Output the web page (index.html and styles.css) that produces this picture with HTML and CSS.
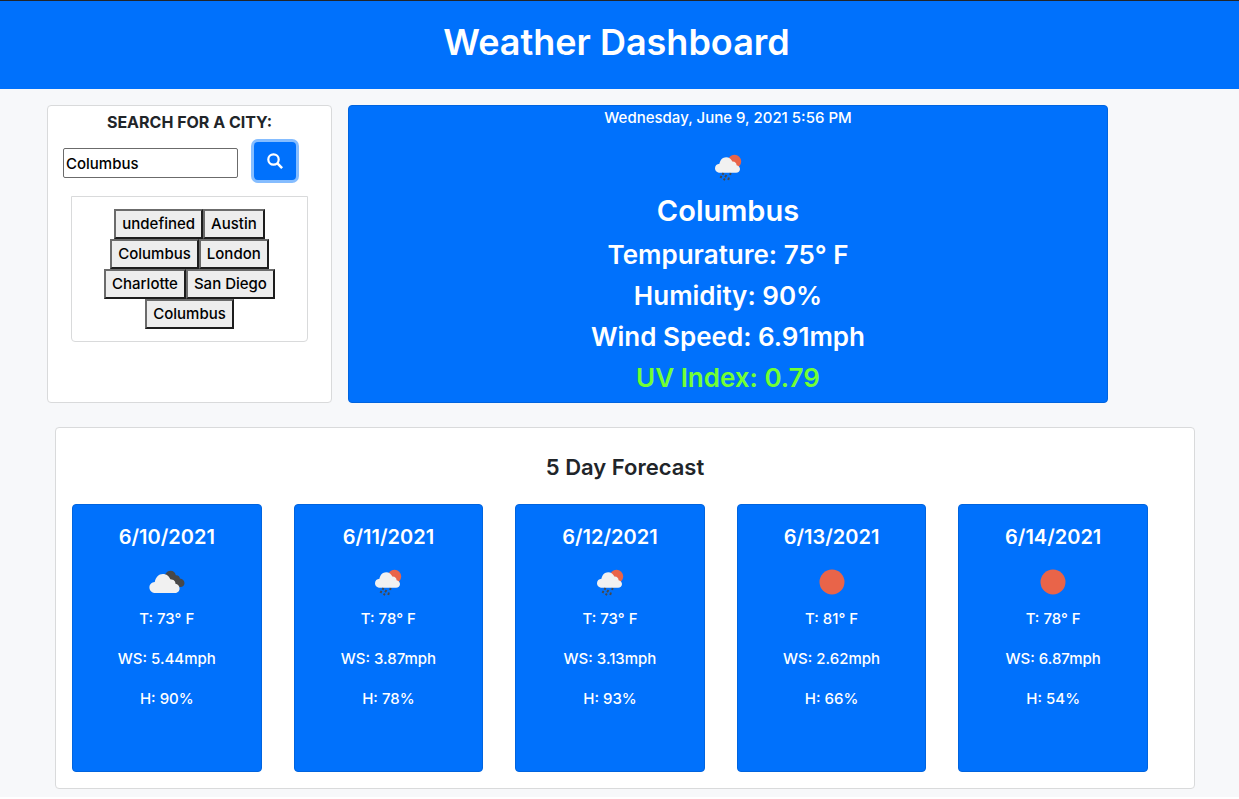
FILE: index.html
```html
<!DOCTYPE html>
<html lang="en">
<head>
<meta charset="utf-8">
<meta name="viewport" content="width=device-width, initial-scale=1">
<title>Weather Dashboard</title>
<link rel="stylesheet" href="styles.css">
</head>
<body>
<svg class="sprite" aria-hidden="true">
  <symbol id="cloud" viewBox="0 0 27 17">
    <path d="M5.600 17C2.500 17 0 14.900 0 12c0-2.700 2-4.800 4.800-4.900C5.500 3 8.300 0 12 0c3.200 0 5.800 2 6.700 4.800 3.300.1 4.600 2 4.600 3.900 2 .2 3.700 1.900 3.700 4.200 0 2.400-1.900 4.100-4.200 4.100z"/>
  </symbol>
  <symbol id="rain" viewBox="0 0 50 50">
    <circle cx="31.500" cy="19.500" r="6.700" fill="#e96449"/>
    <use href="#cloud" x="12" y="15" width="25" height="16" fill="#f1f1f1"/>
    <path d="M20.500 31l-1 1.800M27.700 31l-.6 2M18.500 33.800l-1 2.200M23.500 33l-1.400 2.200M21.800 36.500l-1 1.800M26 35.500l-.8 2.500" fill="none" stroke="#484848" stroke-width="1.900"/>
  </symbol>
  <symbol id="clouds" viewBox="0 0 50 50">
    <path d="M22 22c.5-5 3-8.200 6.500-8.200 3 0 4.700 1.800 5.300 4.400 2.600-.2 4 1.300 4.100 3.200 2.700.4 4.600 2.400 4.600 4.600 0 2.400-1.800 4-4 4H26z" fill="#484848"/>
    <use href="#cloud" x="7" y="17" width="31" height="19" fill="#f1f1f1"/>
  </symbol>
  <symbol id="sun" viewBox="0 0 50 50">
    <circle cx="25" cy="25" r="12.500" fill="#e96449"/>
  </symbol>
</svg>

<header class="banner"><h1>Weather Dashboard</h1></header>

<main class="page">
  <div class="top">
    <section class="card search">
      <label class="search-label" for="city">Search for a city:</label>
      <form class="search-form">
        <input class="search-input" id="city" type="text" value="Columbus">
        <button class="search-button" type="button" aria-label="Search">
          <svg viewBox="0 0 16 16" width="16" height="16" aria-hidden="true"><circle cx="6.500" cy="6.500" r="5.200" fill="none" stroke="#fff" stroke-width="2.200"/><path d="M10.200 10.200l4.900 4.900" stroke="#fff" stroke-width="2.600"/></svg>
        </button>
      </form>
      <div class="history">
        <button type="button">undefined</button><button type="button">Austin</button><button type="button">Columbus</button><button type="button">London</button><button type="button">Charlotte</button><button type="button">San Diego</button><button type="button">Columbus</button>
      </div>
    </section>

    <section class="card blue current">
      <p class="date">Wednesday, June 9, 2021 5:56 PM</p>
      <svg class="icon"><use href="#rain"/></svg>
      <h2>Columbus</h2>
      <h3>Tempurature: 75° F</h3>
      <h3>Humidity: 90%</h3>
      <h3>Wind Speed: 6.91mph</h3>
      <h3 class="uv">UV Index: 0.79</h3>
    </section>
  </div>

  <section class="card forecast">
    <h4>5 Day Forecast</h4>
    <div class="days">
      <article class="card blue day"><h5>6/10/2021</h5><svg class="icon"><use href="#clouds"/></svg><p>T: 73° F</p><p>WS: 5.44mph</p><p>H: 90%</p></article>
      <article class="card blue day"><h5>6/11/2021</h5><svg class="icon"><use href="#rain"/></svg><p>T: 78° F</p><p>WS: 3.87mph</p><p>H: 78%</p></article>
      <article class="card blue day"><h5>6/12/2021</h5><svg class="icon"><use href="#rain"/></svg><p>T: 73° F</p><p>WS: 3.13mph</p><p>H: 93%</p></article>
      <article class="card blue day"><h5>6/13/2021</h5><svg class="icon"><use href="#sun"/></svg><p>T: 81° F</p><p>WS: 2.62mph</p><p>H: 66%</p></article>
      <article class="card blue day"><h5>6/14/2021</h5><svg class="icon"><use href="#sun"/></svg><p>T: 78° F</p><p>WS: 6.87mph</p><p>H: 54%</p></article>
    </div>
  </section>
</main>
</body>
</html>
```
FILE: styles.css
```css
* { box-sizing: border-box; }

body {
  margin: 0;
  font: 500 15px/24px Inter, "Liberation Sans", sans-serif;
  color: #212529;
}

h1, h2, h3, h4, h5, p { margin: 0; }
h1, h2, h3, h4, h5 { font-weight: 600; }

.sprite { display: none; }

.banner {
  border-top: 1px solid #212529;
  padding: 17px 6px 23px 0;
  background: #0071fc;
  color: #fff;
  text-align: center;
}

.banner h1 { font-size: 36px; line-height: 48px; }

.page {
  padding: 16px 44px 8px 47px;
  background: #f7f8fa;
}

.card {
  border: 1px solid #d9dadb;
  border-radius: 4px;
  background: #fff;
  text-align: center;
}

.blue {
  border-color: #0064df;
  background: #0071fc;
  color: #fff;
}

.icon { display: block; width: 50px; height: 50px; margin: 0 auto; }

.top {
  display: flex;
  gap: 16px;
  margin-right: 8px;
}

.search { flex: 0 0 25%; padding: 4px 15px; }

.search-label {
  display: block;
  font-size: 16px;
  font-weight: 700;
  text-transform: uppercase;
}

.search-form {
  display: flex;
  align-items: flex-end;
  gap: 16px;
  margin-top: 8px;
}

.search-input {
  width: 175px;
  min-width: 0;
  height: 30px;
  margin: 0 0 2px;
  padding: 1px 2px;
  border: 1px solid #6b6b6b;
  border-radius: 2px;
  font: inherit;
  color: #000;
}

.search-button {
  display: grid;
  place-items: center;
  width: 42px;
  height: 38px;
  padding: 0;
  border: 0;
  border-radius: 4px;
  background: #0071fc;
  box-shadow: 0 0 0 3px #85bdff;
}

.history {
  display: flex;
  flex-wrap: wrap;
  justify-content: center;
  margin: 16px 8px 0;
  padding: 12px;
  border: 1px solid #d9dadb;
  border-radius: 0 0 4px 4px;
}

.history button {
  height: 30px;
  padding: 1px 6px;
  border: 2px solid;
  border-color: #6b6b6b #1d1d1d #1d1d1d #6b6b6b;
  border-radius: 0;
  background: #ededed;
  font: inherit;
  color: #000;
}

.current { flex: 0 0 66.6667%; }
.current h2 { margin-bottom: 8px; font-size: 29px; line-height: 38px; }
.current h3 { margin-bottom: 8px; font-size: 26px; line-height: 33px; }
.current .uv { color: #72ff33; }
.date { margin-bottom: 12px; }

.forecast { margin: 24px 0 0 8px; padding: 24px 16px 16px; }
.forecast h4 { font-size: 22px; line-height: 30px; }

.days {
  display: flex;
  gap: 32px;
  margin: 22px 30px 0 0;
}

.day { flex: 1; padding: 20px 8px 44px; }
.day h5 { margin-bottom: 8px; font-size: 20px; line-height: 24px; }
.day p { margin-bottom: 16px; }
```
